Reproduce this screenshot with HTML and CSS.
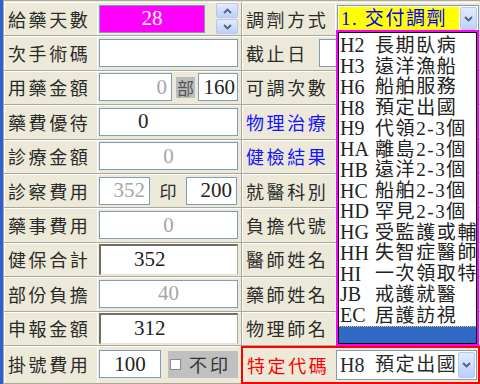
FILE: index.html
```html
<!DOCTYPE html>
<html lang="zh-Hant">
<head>
<meta charset="utf-8">
<link rel="stylesheet" href="styles.css">
</head>
<body>
<div class="window">
  <div class="edge"></div>
  <div class="form">
    <!-- row 1 -->
    <div class="cell lbl">給藥天數</div>
    <div class="cell fld">
      <div class="tb magenta w106 center">28</div>
      <div class="spin">
        <div class="sbtn"><svg width="9" height="6" viewBox="0 0 9 6"><path d="M1 5 L4.5 1.5 L8 5" fill="none" stroke="#4D6185" stroke-width="1.8"/></svg></div>
        <div class="sbtn"><svg width="9" height="6" viewBox="0 0 9 6"><path d="M1 1 L4.5 4.5 L8 1" fill="none" stroke="#4D6185" stroke-width="1.8"/></svg></div>
      </div>
    </div>
    <div class="cell lbl rl">調劑方式</div>
    <div class="cell fld rf">
      <div class="sel top">
        <div class="val yellow">1.&nbsp;交付調劑</div>
        <div class="arrow"><svg width="9" height="6" viewBox="0 0 9 6"><path d="M1 1 L4.5 4.5 L8 1" fill="none" stroke="#4D6185" stroke-width="1.8"/></svg></div>
      </div>
    </div>
    <!-- row 2 -->
    <div class="cell lbl">次手術碼</div>
    <div class="cell fld"><div class="tb w139"></div></div>
    <div class="cell lbl rl span2">截止日<div class="tb cutoff"></div></div>
    <!-- row 3 -->
    <div class="cell lbl">用藥金額</div>
    <div class="cell fld">
      <div class="tb w73 right gray">0</div>
      <div class="bu">部</div>
      <div class="tb w40 right">160</div>
    </div>
    <div class="cell lbl rl">可調次數</div>
    <div class="cell fld rf"></div>
    <!-- row 4 -->
    <div class="cell lbl">藥費優待</div>
    <div class="cell fld"><div class="tb w139 padl">0</div></div>
    <div class="cell lbl rl blue">物理治療</div>
    <div class="cell fld rf"></div>
    <!-- row 5 -->
    <div class="cell lbl">診療金額</div>
    <div class="cell fld"><div class="tb w139 center gray">0</div></div>
    <div class="cell lbl rl blue">健檢結果</div>
    <div class="cell fld rf"></div>
    <!-- row 6 -->
    <div class="cell lbl">診察費用</div>
    <div class="cell fld">
      <div class="tb w51 right gray">352</div>
      <div class="yin">印</div>
      <div class="tb w51 right">200</div>
    </div>
    <div class="cell lbl rl">就醫科別</div>
    <div class="cell fld rf"></div>
    <!-- row 7 -->
    <div class="cell lbl">藥事費用</div>
    <div class="cell fld"><div class="tb w139 center gray">0</div></div>
    <div class="cell lbl rl">負擔代號</div>
    <div class="cell fld rf"></div>
    <!-- row 8 -->
    <div class="cell lbl">健保合計</div>
    <div class="cell fld"><div class="tb w139 sunken padl2">352</div></div>
    <div class="cell lbl rl">醫師姓名</div>
    <div class="cell fld rf"></div>
    <!-- row 9 -->
    <div class="cell lbl">部份負擔</div>
    <div class="cell fld"><div class="tb w139 center gray">40</div></div>
    <div class="cell lbl rl">藥師姓名</div>
    <div class="cell fld rf"></div>
    <!-- row 10 -->
    <div class="cell lbl">申報金額</div>
    <div class="cell fld"><div class="tb w139 sunken padl2">312</div></div>
    <div class="cell lbl rl">物理師名</div>
    <div class="cell fld rf"></div>
    <!-- row 11 -->
    <div class="cell lbl">掛號費用</div>
    <div class="cell fld">
      <div class="tb w62 center">100</div>
      <div class="chk"><span class="box"></span>不印</div>
    </div>
    <div class="cell span2 special">
      <div class="lbl red">特定代碼</div>
      <div class="sel bottom">
        <div class="val"><span class="code">H8</span>預定出國</div>
        <div class="arrow"><svg width="9" height="6" viewBox="0 0 9 6"><path d="M1 1 L4.5 4.5 L8 1" fill="none" stroke="#4D6185" stroke-width="1.8"/></svg></div>
      </div>
    </div>
  </div>

  <div class="dd">
    <div class="ddlist">
      <div class="opt"><span class="code">H2</span><span class="name">長期臥病</span></div>
      <div class="opt"><span class="code">H3</span><span class="name">遠洋漁船</span></div>
      <div class="opt"><span class="code">H6</span><span class="name">船舶服務</span></div>
      <div class="opt"><span class="code">H8</span><span class="name">預定出國</span></div>
      <div class="opt"><span class="code">H9</span><span class="name">代領2-3個</span></div>
      <div class="opt"><span class="code">HA</span><span class="name">離島2-3個</span></div>
      <div class="opt"><span class="code">HB</span><span class="name">遠洋2-3個</span></div>
      <div class="opt"><span class="code">HC</span><span class="name">船舶2-3個</span></div>
      <div class="opt"><span class="code">HD</span><span class="name">罕見2-3個</span></div>
      <div class="opt"><span class="code">HG</span><span class="name">受監護或輔</span></div>
      <div class="opt"><span class="code">HH</span><span class="name">失智症醫師</span></div>
      <div class="opt"><span class="code">HI</span><span class="name">一次領取特</span></div>
      <div class="opt"><span class="code">JB</span><span class="name">戒護就醫</span></div>
      <div class="opt"><span class="code">EC</span><span class="name">居護訪視</span></div>
      <div class="opt hl"></div>
    </div>
  </div>
</div>
</body>
</html>
```

FILE: styles.css
```css
* { box-sizing: border-box; margin: 0; padding: 0; }
html, body { width: 480px; height: 384px; overflow: hidden; }
body {
  background: #ECE9D8;
  font-family: "Noto Sans CJK TC", sans-serif;
  color: #2a2a2a;
}
.window { position: relative; display: flex; height: 384px; }
.edge { width: 3px; background: #2D5FD3; flex: none; }
.form {
  flex: 1;
  display: grid;
  grid-template-columns: 93px 144px 94px 145px;
  grid-template-rows: repeat(10, 34.4px) 1fr;
  border-left: 1px solid #ACA899;
  border-top: 1px solid #ACA899;
  padding-top: 1px;
}
.cell {
  display: flex;
  align-items: center;
  border-bottom: 1px solid #ACA899;
  box-shadow: inset 0 1px 0 #fff, inset 1px 0 0 #fff;
  min-width: 0;
  overflow: hidden;
}
.lbl {
  padding-left: 4px;
  font-size: 18px;
  letter-spacing: 2.6px;
  white-space: nowrap;
  line-height: 1;
}
.rl { border-left: 1px solid #ACA899; }
.rf { }
.span2 { grid-column: span 2; }
.blue { color: #1414ff; }
.red { color: #ff0000; }
.fld { padding-left: 2px; }

.tb {
  height: 28px;
  border: 1px solid #7F9DB9;
  background: #fff;
  font-family: "Liberation Serif", serif;
  font-size: 21px;
  letter-spacing: 0;
  display: flex;
  align-items: center;
  padding: 0 4px;
  line-height: 1;
  color: #222;
  flex: none;
}
.center { justify-content: center; }
.right { justify-content: flex-end; }
.padl { padding-left: 38px; }
.padl2 { padding-left: 33px; }
.gray { color: #a6a6a6; }
.magenta { background: #ff00ff; color: #fff; }
.w106 { width: 106px; }
.w139 { width: 139px; }
.w73 { width: 73px; }
.w40 { width: 40px; padding: 0 2px; }
.w51 { width: 51px; }
.w62 { width: 62px; }
.sunken {
  border-top: 2px solid #716F64;
  border-left: 2px solid #716F64;
  border-right: 1px solid #ACA899;
  border-bottom: 1px solid #e6e3d6;
  height: 31px;
}
.cutoff { width: 120px; margin-left: 11px; height: 28px; }

.spin {
  margin-left: 11px;
  display: flex;
  flex-direction: column;
  gap: 1px;
}
.sbtn {
  width: 22px;
  height: 15px;
  border: 1px solid #B4C8F4;
  border-radius: 2px;
  background: linear-gradient(#E2EAFE, #BED0F8);
  display: flex;
  align-items: center;
  justify-content: center;
}

.bu {
  width: 19px;
  height: 21px;
  margin: 0 3px 0 4px;
  background: #BDBDBD;
  color: #555;
  font-size: 17px;
  display: flex;
  align-items: center;
  justify-content: center;
  line-height: 1;
}
.yin {
  width: 36px;
  text-align: center;
  font-size: 17px;
  line-height: 1;
}
.chk {
  margin-left: 7px;
  width: 70px;
  height: 27px;
  background: #C0C0C0;
  display: flex;
  align-items: center;
  font-size: 18px;
  letter-spacing: 3px;
  color: #333;
  line-height: 1;
}
.chk .box {
  width: 11px;
  height: 11px;
  background: #fff;
  border: 1px solid #8c8c8c;
  margin: 0 8px 0 2px;
}

.sel {
  display: flex;
  border: 1px solid #7F9DB9;
  background: #fff;
  padding: 1px;
}
.sel .val {
  flex: 1;
  display: flex;
  align-items: center;
  padding-left: 2px;
  font-family: "Liberation Serif", "Noto Sans CJK TC", serif;
  font-size: 19px;
  letter-spacing: 1.6px;
  line-height: 1;
  white-space: nowrap;
  overflow: hidden;
}
.sel.top { width: 142px; height: 27px; margin-left: 0; }
.yellow { background: #ffff00; color: #0000ff; }
.arrow {
  width: 17px;
  margin-left: 1px;
  border: 1px solid #B4C8F4;
  border-radius: 2px;
  background: linear-gradient(#E2EAFE, #BED0F8);
  display: flex;
  align-items: center;
  justify-content: center;
}
.special {
  border: 2px solid #ff0000;
  box-shadow: none;
  padding-left: 0;
}
.special .lbl { padding-left: 4px; width: 94px; }
.sel.bottom { width: 141px; height: 30px; margin-left: -1px; }
.code {
  display: inline-block;
  width: 35px;
  font-family: "Liberation Serif", serif;
  font-size: 20px;
  letter-spacing: 0;
  flex: none;
}

.dd {
  position: absolute;
  left: 336px;
  top: 30px;
  width: 143px;
  height: 316px;
  border: 2px solid #ff00ff;
  background: #ff00ff;
}
.ddlist {
  height: 100%;
  border: 1px solid #000;
  background: #fff;
  overflow: hidden;
  padding-top: 2px;
}
.opt {
  height: 20.75px;
  display: flex;
  align-items: center;
  white-space: nowrap;
  padding-left: 1px;
  color: #222;
  line-height: 1;
}
.opt .name {
  font-family: "Liberation Serif", "Noto Sans CJK TC", serif;
  font-size: 19px;
  letter-spacing: 1.6px;
}
.opt.hl {
  background: #316AC5;
  border-top: 1px dotted #d9c27a;
  height: 18px;
}
```
